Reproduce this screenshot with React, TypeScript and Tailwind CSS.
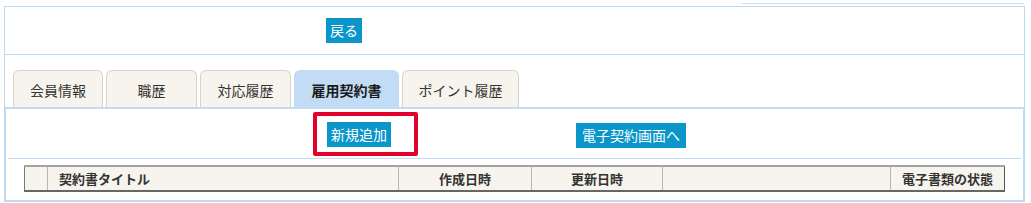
import React from 'react';

const tabs = [
  { label: '会員情報', w: 'w-[90px]' },
  { label: '職歴', w: 'w-[91px]' },
  { label: '対応履歴', w: 'w-[91px]' },
  { label: '雇用契約書', w: 'w-[105px]', active: true },
  { label: 'ポイント履歴', w: 'w-[117px]' },
];

function BlueButton({ children, className = '' }: { children: React.ReactNode; className?: string }) {
  return (
    <button className={`h-[25px] bg-[#0a96c9] px-[4px] text-[14px] leading-[25px] text-white ${className}`}>
      {children}
    </button>
  );
}

export default function App() {
  return (
    <div className="relative h-[203px] w-[1031px] overflow-hidden bg-white font-['Noto_Sans_CJK_JP','Noto_Sans',sans-serif] text-[#333]">
      {/* line of the block above */}
      <div className="pt-[3px]">
        <div className="ml-[742px] h-px w-[282px] bg-[#c6ddf2]" />
      </div>

      <div className="ml-[4px] mt-[2px] w-[1021px] border border-[#bcd8f3]">
        {/* back button row */}
        <div className="flex h-[48px] items-center border-b border-[#bcd8f3] pl-[321px]">
          <BlueButton className="h-[23px] leading-[23px]">戻る</BlueButton>
        </div>

        {/* tabs */}
        <div className="flex gap-[3px] pl-[8px] pt-[15px]">
          {tabs.map((t) => (
            <div
              key={t.label}
              className={`flex h-[37px] items-center justify-center rounded-t-[6px] border border-b-0 pt-[2px] text-[14px] ${t.w} ${
                t.active
                  ? 'border-[#c2dcf5] bg-[#c2dcf5] font-bold text-[#1a1a1a]'
                  : 'border-[#d6d2cc] bg-[#f7f4ee]'
              }`}
            >
              {t.label}
            </div>
          ))}
        </div>

        {/* panel */}
        <div className="border-x border-b border-t-2 border-[#c2dcf5] pb-[8px]">
          <div className="flex pl-[321px] pt-[13px]">
            <BlueButton>新規追加</BlueButton>
            <div className="ml-[185px]">
              <BlueButton className="px-[6px]">電子契約画面へ</BlueButton>
            </div>
          </div>

          <div className="mx-[2px] mt-[10px] h-px bg-[#c2dcf5]" />

          <table className="ml-[18px] mt-[6px] w-[981px] border-collapse bg-[#f7f4ee] text-[13px] font-bold text-[#333]">
            <thead>
              <tr className="h-[25px] border-b-2 border-t-2 border-b-[#666] border-t-[#a3a3a3]">
                <th className="w-[23px] border-l border-r border-l-[#777] border-r-[#b5b5b5]" />
                <th className="w-[351px] border-r border-[#b5b5b5] pl-[11px] text-left">契約書タイトル</th>
                <th className="w-[133px] border-r border-[#b5b5b5] text-center">作成日時</th>
                <th className="w-[131px] border-r border-[#b5b5b5] text-center">更新日時</th>
                <th className="w-[228px] border-r border-[#b5b5b5]" />
                <th className="border-r border-[#555] text-center">電子書類の状態</th>
              </tr>
            </thead>
          </table>
        </div>
      </div>

      {/* annotation highlight */}
      <div className="absolute left-[313px] top-[112px] h-[44px] w-[105px] rounded-[2px] border-[4px] border-[#e3002b]" />
    </div>
  );
}
